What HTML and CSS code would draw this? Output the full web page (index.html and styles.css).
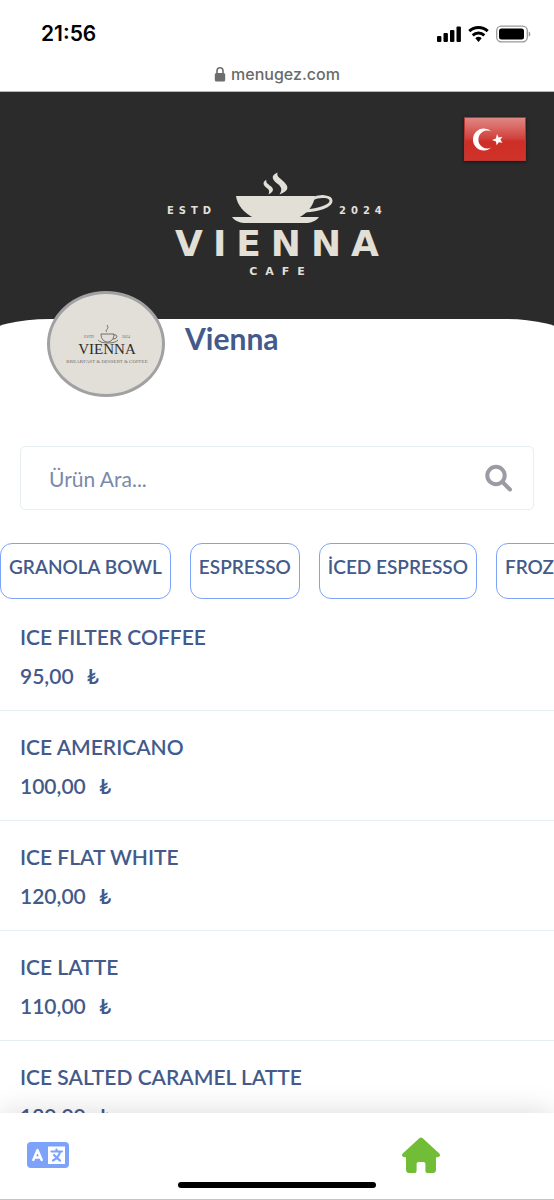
FILE: index.html
```
<!DOCTYPE html>
<html lang="tr">
<head>
<meta charset="utf-8">
<meta name="viewport" content="width=device-width, initial-scale=1">
<title>Vienna</title>
<link rel="stylesheet" href="styles.css">
</head>
<body>
<div class="app">
  <header class="browser">
    <div class="status">
      <span class="time">21:56</span>
      <svg class="status-icons" width="96" height="20" viewBox="0 0 96 20" aria-hidden="true">
        <rect x="1" y="12" width="4.400" height="6" rx="1"/>
        <rect x="7.500" y="9" width="4.400" height="9" rx="1"/>
        <rect x="14" y="6" width="4.400" height="12" rx="1"/>
        <rect x="20.500" y="2.500" width="4.400" height="15.500" rx="1"/>
        <g fill="none" stroke="#000" stroke-width="3">
          <path d="M33.300 7.200a13.500 13.500 0 0 1 18.400 0"/>
          <path d="M36.700 11.400a8.500 8.500 0 0 1 11.600 0"/>
        </g>
        <path d="M39.300 14.300a4.800 4.800 0 0 1 6.400 0L42.500 18z"/>
        <rect x="60.700" y="2.200" width="30.600" height="15.600" rx="4.500" fill="none" stroke="#999" stroke-width="1.300"/>
        <rect x="63" y="4.400" width="25" height="11.200" rx="2.500"/>
        <path d="M92.700 7.400c2.200.8 2.200 4.400 0 5.200z" fill="#999"/>
      </svg>
    </div>
    <div class="address">
      <svg width="12" height="16" viewBox="0 0 12 16" aria-hidden="true">
        <path d="M3 8V4.800a3 3 0 0 1 6 0V8" fill="none" stroke="#6e6e6e" stroke-width="1.600"/>
        <rect x="0.800" y="7" width="10.400" height="8.500" rx="1.500" fill="#6e6e6e"/>
      </svg>
      <span>menugez.com</span>
    </div>
  </header>

  <section class="cover">
    <svg class="cover-logo" width="280" height="120" viewBox="0 0 280 120" role="img" aria-label="Vienna Cafe">
      <g fill="#e2dfd7">
        <path d="M99 30h79c-1 9-7 17-17 22h-44C107 47 100 39 99 30z"/>
        <path d="M95 51h87c-3 4-8 6-14 6h-59c-6 0-11-2-14-6z"/>
        <path d="M175 33c8-4 19-3 19 2 0 5-12 9-26 10" fill="none" stroke="#e2dfd7" stroke-width="3"/>
        <path d="M129.500 13.500c-1 3 1 4 4 6.500 4 3 3 6-2 8.500 1-3 1-4-1-6-4-3-6-6-1-9z"/>
        <path d="M140.500 6.500c-1 4 2 5 5 8 7 6 7 10-3 14 3-5 2-7-1-10-7-5-8-9-1-12z"/>
      </g>
      <g class="cover-words">
        <text class="cover-small" x="30" y="48">ESTD</text>
        <text class="cover-small" x="202" y="48">2024</text>
        <text class="cover-name" x="145" y="90">VIENNA</text>
        <text class="cover-kind" x="144" y="109">CAFE</text>
      </g>
    </svg>
    <button class="flag" type="button" aria-label="Türkçe">
      <svg width="62" height="44" viewBox="0 0 62 44" aria-hidden="true">
        <defs>
          <linearGradient id="flagShade" x1="0" y1="0" x2="0" y2="1">
            <stop offset="0" stop-color="#e08784"/>
            <stop offset="0.500" stop-color="#d0403a"/>
            <stop offset="0.550" stop-color="#cd2e26"/>
            <stop offset="1" stop-color="#d0332b"/>
          </linearGradient>
        </defs>
        <rect width="62" height="44" fill="#b9352f"/>
        <rect x="1" y="1" width="60" height="42" fill="url(#flagShade)"/>
        <path d="M27.500 14.500a11 11 0 1 0 0 16 9 9 0 1 1 0-16z" fill="#fff"/>
        <path d="M33 17l1.600 3.500 3.700-.8-1.900 3 2.100 3.100-3.700-.6-2.200 3-.6-3.800-4-1.400 3.900-1.600z" fill="#fff"/>
      </svg>
    </button>
  </section>

  <main class="sheet">
    <div class="profile">
      <div class="avatar">
        <svg width="100" height="44" viewBox="0 0 100 44" role="img" aria-label="Vienna Breakfast &amp; Dessert &amp; Coffee">
          <g fill="none" stroke="#55524d" stroke-width="0.800">
            <path d="M45 12h13c0 5-3 8-6.500 8S45 17 45 12zM58 13c4-1 4 4-1 4M42 18c3 4 17 4 20 0"/>
            <path d="M51 10c-3-2 3-3 0-7"/>
          </g>
          <text class="mark-tiny" x="33" y="16">ESTD</text>
          <text class="mark-tiny" x="70" y="16">2024</text>
          <text class="mark-name" x="51" y="32">VIENNA</text>
          <text class="mark-line" x="51" y="41">BREAKFAST &amp; DESSERT &amp; COFFEE</text>
        </svg>
      </div>
      <h1 class="name">Vienna</h1>
    </div>

    <form class="search" role="search">
      <input type="text" placeholder="Ürün Ara..." aria-label="Ürün Ara">
      <button type="button" aria-label="Ara">
        <svg width="28" height="28" viewBox="0 0 28 28" fill="none" stroke="#9c9ba3" aria-hidden="true">
          <circle cx="11" cy="11.500" r="8.700" stroke-width="4"/>
          <path d="M18 18.500l7 7" stroke-width="4" stroke-linecap="round"/>
        </svg>
      </button>
    </form>

    <nav class="chips" aria-label="Kategoriler">
      <a href="#granola">GRANOLA BOWL</a>
      <a href="#espresso">ESPRESSO</a>
      <a href="#iced">İCED ESPRESSO</a>
      <a href="#frozen">FROZEN</a>
    </nav>

    <ul class="menu">
      <li><h2>ICE FILTER COFFEE</h2><p>95,00 <span>₺</span></p></li>
      <li><h2>ICE AMERICANO</h2><p>100,00 <span>₺</span></p></li>
      <li><h2>ICE FLAT WHITE</h2><p>120,00 <span>₺</span></p></li>
      <li><h2>ICE LATTE</h2><p>110,00 <span>₺</span></p></li>
      <li><h2>ICE SALTED CARAMEL LATTE</h2><p>120,00 <span>₺</span></p></li>
    </ul>
  </main>

  <footer class="dock">
    <div class="dock-links">
      <a href="#language" aria-label="Dil">
        <svg width="42" height="26" viewBox="0 0 42 26" aria-hidden="true">
          <rect width="42" height="26" rx="4" fill="#7da2fa"/>
          <rect x="21" y="4.500" width="17" height="17.500" fill="#fff"/>
          <path d="M6.300 18l4.200-10 4.200 10M8 15.500h5" fill="none" stroke="#fff" stroke-width="2.400" stroke-linecap="round" stroke-linejoin="round"/>
          <path d="M24.500 9.500h10.500M29.500 7.500v2M33 10c-1 4-4 7-7 8.500M27 13c2 2 4 4 6 5.500" fill="none" stroke="#7da2fa" stroke-width="2.200" stroke-linecap="round"/>
        </svg>
      </a>
      <a href="#home" aria-label="Ana sayfa">
        <svg width="38" height="36" viewBox="0 0 38 36" aria-hidden="true">
          <path d="M17.500 1.100a2.200 2.200 0 0 1 3 0L37 16.200c2 1.800.8 4-1.500 4H34v12.600c0 2-1 3.200-3 3.200h-5c-1.800 0-2.600-1-2.600-2.600V27c0-1.200-.7-2-2-2h-4.800c-1.300 0-2 .8-2 2v6.400c0 1.600-.8 2.600-2.600 2.600H7c-2 0-3-1.200-3-3.200V20.200H2.500c-2.300 0-3.500-2.200-1.500-4z" fill="#72bd37"/>
        </svg>
      </a>
    </div>
    <div class="home-bar"></div>
  </footer>
</div>
</body>
</html>
```
FILE: styles.css
```
* {
  box-sizing: border-box;
}

body {
  margin: 0;
  background: #fff;
  color: #435a8a;
  font-family: Lato, "Open Sans", sans-serif;
  font-size: 21px;
}

.app {
  display: flex;
  flex-direction: column;
  height: 100vh;
  overflow: hidden;
}

.browser {
  flex: none;
  font-family: Inter, Roboto, sans-serif;
  border-bottom: 1px solid #b5b5b5;
}

.status {
  display: flex;
  justify-content: space-between;
  align-items: center;
  padding: 20px 22px 0 41px;
  color: #000;
}

.time {
  font-size: 21px;
  font-weight: 600;
  line-height: 27px;
}

.address {
  display: flex;
  justify-content: center;
  align-items: center;
  gap: 5px;
  padding: 17px 0 7px;
  color: #6a6a6a;
  font-size: 16px;
  font-weight: 500;
  line-height: 20px;
}

.cover {
  flex: none;
  position: relative;
  display: flex;
  justify-content: center;
  height: 244px;
  padding-top: 74px;
  background: #2b2b2b;
}

.cover-words {
  fill: #e2dfd7;
  font-family: "DejaVu Sans", sans-serif;
  font-weight: 700;
}

.cover-small {
  font-size: 10px;
  letter-spacing: 5px;
}

.cover-name {
  font-size: 36px;
  letter-spacing: 10px;
  text-anchor: middle;
}

.cover-kind {
  font-size: 11px;
  letter-spacing: 8px;
  text-anchor: middle;
}

.flag {
  position: absolute;
  top: 25px;
  right: 28px;
  padding: 0;
  border: 0;
  background: none;
  box-shadow: 0 1px 3px rgba(0, 0, 0, 0.5);
}

svg {
  display: block;
  flex: none;
}

.sheet {
  flex: 1;
  position: relative;
  min-height: 0;
  margin: -17px -10px 0;
  padding: 0 10px;
  border-radius: 60px 60px 0 0 / 15px 15px 0 0;
  background: #fff;
}

.profile {
  display: flex;
  gap: 20px;
  margin-top: -28px;
  padding-left: 47px;
}

.avatar {
  display: flex;
  align-items: center;
  justify-content: center;
  width: 118px;
  height: 106px;
  border: 3px solid #a1a1a3;
  border-radius: 50%;
  background: #e2dfd8;
}

.mark-name {
  fill: #2e2c2a;
  font-family: "Liberation Serif", serif;
  font-size: 15px;
  text-anchor: middle;
}

.mark-tiny,
.mark-line {
  fill: #6f6c66;
  font-family: "Liberation Serif", serif;
  font-size: 4px;
  text-anchor: middle;
}

.mark-line {
  font-size: 5px;
}

.name {
  margin: 29px 0 0;
  font-size: 30px;
  font-weight: 700;
  line-height: 36px;
}

.search {
  display: flex;
  align-items: center;
  height: 64px;
  margin: 49px 20px 0;
  padding: 0 20px 0 28px;
  border: 1px solid #e6eef2;
  border-radius: 5px;
}

.search input {
  flex: 1;
  min-width: 0;
  padding: 0;
  border: 0;
  outline: 0;
  background: none;
  color: #435a8a;
  font: inherit;
}

.search input::placeholder {
  color: #7b89ab;
  opacity: 1;
}

.search button {
  padding: 0;
  border: 0;
  background: none;
}

.chips {
  display: flex;
  gap: 19px;
  margin: 33px 0 0;
  overflow: hidden;
}

.chips a {
  flex: none;
  height: 56px;
  padding: 8px 8px 0;
  border: 1px solid #7da2fa;
  border-radius: 12px;
  color: #435a8a;
  font-size: 19px;
  font-weight: 600;
  line-height: 30px;
  text-decoration: none;
}

.menu {
  margin: 2px 0 0;
  padding: 0;
  list-style: none;
}

.menu li {
  padding: 16px 20px 15px;
  border-bottom: 1px solid #e6eef2;
  line-height: 39px;
}

.menu h2,
.menu p {
  margin: 0;
  font-size: 21px;
  font-weight: 600;
}

.menu span {
  margin-left: 8px;
  font-size: 21px;
  font-weight: 600;
}

.dock {
  flex: none;
  position: relative;
  display: flex;
  flex-direction: column;
  align-items: center;
  height: 87px;
  border-bottom: 1px solid #c4c4c4;
  background: #fff;
  box-shadow: 0 0 30px rgba(0, 0, 0, 0.15);
}

.dock-links {
  display: flex;
  justify-content: space-between;
  align-items: center;
  width: 100%;
  padding: 24px 114px 9px 27px;
}

.home-bar {
  width: 198px;
  height: 6px;
  border-radius: 3px;
  background: #000;
}
```
